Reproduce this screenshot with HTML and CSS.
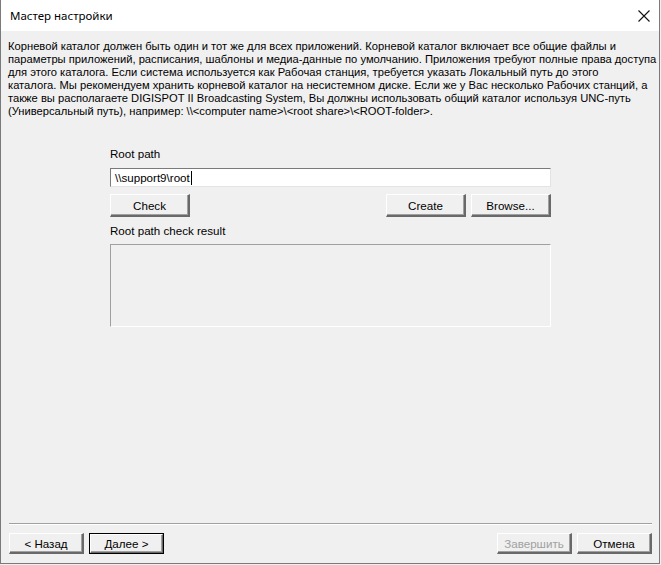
FILE: index.html
```html
<!DOCTYPE html>
<html lang="ru">
<head>
    <meta charset="UTF-8">
    <title>Мастер настройки</title>
    <link rel="stylesheet" href="styles.css">
</head>
<body>
    <div class="window">
        <div class="title-bar">
            <span class="title">Мастер настройки</span>
            <span class="close">
                <svg width="12" height="12" viewBox="0 0 12 12"><path d="M0.5 0.5 L11.5 11.5 M11.5 0.5 L0.5 11.5" stroke="#111" stroke-width="1.1" fill="none"/></svg>
            </span>
        </div>
        <div class="content">
            <p class="intro">Корневой каталог должен быть один и тот же для всех приложений. Корневой каталог включает все общие файлы и<br>параметры приложений, расписания, шаблоны и медиа-данные по умолчанию. Приложения требуют полные права доступа<br>для этого каталога. Если система используется как Рабочая станция, требуется указать Локальный путь до этого<br>каталога. Мы рекомендуем хранить корневой каталог на несистемном диске. Если же у Вас несколько Рабочих станций, а<br>также вы располагаете DIGISPOT II Broadcasting System, Вы должны использовать общий каталог используя UNC-путь<br>(Универсальный путь), например: \\&lt;computer name&gt;\&lt;root share&gt;\&lt;ROOT-folder&gt;.</p>

            <div class="root-panel">
                <div class="label">Root path</div>
                <div class="path-input">\\support9\root<span class="caret"></span></div>
                <div class="btn-row">
                    <button class="btn">Check</button>
                    <span class="spacer"></span>
                    <button class="btn">Create</button>
                    <button class="btn">Browse...</button>
                </div>
                <div class="label">Root path check result</div>
                <div class="result-box"></div>
            </div>

            <div class="footer">
                <div class="separator"></div>
                <div class="nav-row">
                    <button class="btn nav">&lt; Назад</button>
                    <button class="btn nav default">Далее &gt;</button>
                    <span class="spacer"></span>
                    <button class="btn nav" disabled>Завершить</button>
                    <button class="btn nav">Отмена</button>
                </div>
            </div>
        </div>
    </div>
</body>
</html>
```

FILE: styles.css
```css
body {
    margin: 0;
    padding: 0;
    background: #f0f0f0;
    font-family: "Liberation Sans", Arial, sans-serif;
    font-size: 12px;
    color: #000;
}

.window {
    width: 660px;
    height: 564px;
    box-sizing: border-box;
    border: 1px solid #7a7a7a;
    border-top: none;
    display: flex;
    flex-direction: column;
    background: #f0f0f0;
}

.title-bar {
    height: 31px;
    background: #fff;
    display: flex;
    align-items: center;
    padding-left: 9px;
    padding-right: 9px;
}

.title {
    flex: 1;
    font-family: "Noto Sans", sans-serif;
    font-size: 11.5px;
    color: #000;
}

.close {
    display: flex;
    width: 12px;
    height: 12px;
}

.content {
    flex: 1;
    display: flex;
    flex-direction: column;
}

.intro {
    margin: 9px 0 0 7px;
    font-size: 11.2px;
    line-height: 12.9px;
    white-space: nowrap;
}

.root-panel {
    margin: 30px 0 0 109px;
    width: 441px;
}

.label {
    font-size: 11.6px;
    line-height: 14px;
}

.path-input {
    margin-top: 7px;
    height: 19px;
    box-sizing: border-box;
    background: #fff;
    border-top: 1px solid #7a7a7a;
    border-left: 1px solid #7a7a7a;
    border-bottom: 1px solid #e3e3e3;
    border-right: 1px solid #e3e3e3;
    padding: 1px 4px;
    font-size: 11.6px;
    line-height: 15px;
    display: flex;
    align-items: center;
}

.caret {
    display: inline-block;
    width: 1px;
    height: 14px;
    background: #000;
    margin-left: 1px;
}

.btn-row {
    display: flex;
    gap: 5px;
    margin-top: 7px;
    margin-bottom: 7px;
}

.spacer {
    flex: 1;
}

.btn {
    width: 80px;
    height: 23px;
    box-sizing: border-box;
    margin: 0;
    padding: 0;
    background: #f0f0f0;
    border-top: 1px solid #fff;
    border-left: 1px solid #fff;
    border-right: 2px solid #696969;
    border-bottom: 2px solid #696969;
    box-shadow: inset -1px -1px 0 #a0a0a0;
    font-family: "Liberation Sans", Arial, sans-serif;
    font-size: 11.6px;
    color: #000;
}

.btn:disabled {
    color: #a0a0a0;
}

.result-box {
    margin-top: 6px;
    height: 83px;
    box-sizing: border-box;
    border-top: 1px solid #a0a0a0;
    border-left: 1px solid #a0a0a0;
    border-bottom: 1px solid #fff;
    border-right: 1px solid #fff;
}

.footer {
    margin-top: auto;
    padding: 0 7px 9px 8px;
}

.separator {
    border-top: 1px solid #a0a0a0;
    border-bottom: 1px solid #fff;
}

.nav-row {
    display: flex;
    gap: 5px;
    margin-top: 8px;
}

.btn.nav {
    width: 75px;
    height: 21px;
}

.btn.default {
    outline: 1px solid #000;
    outline-offset: -1px;
    border-top: 2px solid #fff;
    border-left: 2px solid #fff;
}
```
